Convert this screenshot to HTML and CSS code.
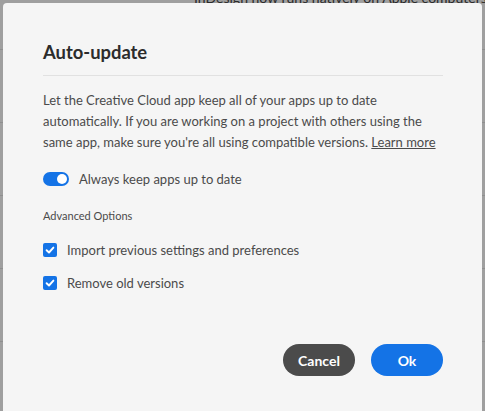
FILE: index.html
```html
<!DOCTYPE html>
<html>
<head>
<meta charset="utf-8">
<link rel="stylesheet" href="styles.css">
</head>
<body>
<div class="page">
  <div class="row row-top"><span class="news">InDesign now runs natively on Apple computers w</span></div>
  <div class="row"></div>
  <div class="row"></div>
  <div class="row"></div>
  <div class="row"></div>
  <div class="row"></div>
</div>
<div class="dialog">
  <h1 class="title">Auto-update</h1>
  <div class="divider"></div>
  <p class="desc">Let the Creative Cloud app keep all of your apps up to date automatically. If you are working on a project with others using the same app, make sure you're all using compatible versions. <a class="link">Learn more</a></p>
  <div class="toggle-row">
    <span class="switch"><span class="knob"></span></span>
    <span class="label">Always keep apps up to date</span>
  </div>
  <div class="section">Advanced Options</div>
  <div class="check-row">
    <span class="box"><svg viewBox="0 0 14 14" width="14" height="14"><path d="M3.6 7.2 L6 9.5 L10.4 4.6" fill="none" stroke="#fff" stroke-width="1.9" stroke-linecap="round" stroke-linejoin="round"/></svg></span>
    <span class="label">Import previous settings and preferences</span>
  </div>
  <div class="check-row">
    <span class="box"><svg viewBox="0 0 14 14" width="14" height="14"><path d="M3.6 7.2 L6 9.5 L10.4 4.6" fill="none" stroke="#fff" stroke-width="1.9" stroke-linecap="round" stroke-linejoin="round"/></svg></span>
    <span class="label">Remove old versions</span>
  </div>
  <div class="actions">
    <button class="btn btn-cancel">Cancel</button>
    <button class="btn btn-ok">Ok</button>
  </div>
</div>
</body>
</html>
```
FILE: styles.css
```css
* { box-sizing: border-box; }
html, body { margin: 0; padding: 0; }
body {
  width: 485px;
  height: 411px;
  overflow: hidden;
  background: #9f9f9f;
  font-family: Lato, "Open Sans", sans-serif;
}
.page {
  display: flex;
  flex-direction: column;
  width: 485px;
  overflow: hidden;
}
.row {
  height: 73px;
  border-bottom: 1px solid #8f8f8f;
}
.row-top { height: 50px; padding-left: 194px; overflow: hidden; }
.news {
  display: block;
  font-size: 14px;
  line-height: 14px;
  margin-top: -9px;
  color: #2a2a2a;
  white-space: nowrap;
}
.dialog {
  position: fixed;
  left: 3px;
  top: 3px;
  width: 479px;
  height: 412px;
  background: #f5f5f5;
  border-radius: 4px;
  padding: 37px 39px 0 40px;
  display: flex;
  flex-direction: column;
}
.title {
  margin: 0;
  font-size: 18.4px;
  line-height: 24px;
  font-weight: 700;
  color: #2c2c2c;
}
.divider {
  height: 1px;
  background: #e1e1e1;
  margin-top: 11px;
}
.desc {
  margin: 14px 0 0;
  font-size: 13px;
  line-height: 21px;
  color: #4b4b4b;
}
.link {
  color: #4b4b4b;
  text-decoration: underline;
}
.toggle-row {
  display: flex;
  align-items: center;
  margin-top: 17px;
  height: 18px;
}
.switch {
  width: 26px;
  height: 14px;
  border-radius: 7px;
  background: #1473e6;
  display: flex;
  align-items: center;
  justify-content: flex-end;
  padding-right: 2px;
  margin-right: 10px;
}
.knob {
  width: 10px;
  height: 10px;
  border-radius: 50%;
  background: #fff;
}
.label {
  font-size: 13px;
  color: #4b4b4b;
}
.section {
  margin-top: 20px;
  font-size: 11px;
  line-height: 16px;
  color: #4b4b4b;
}
.check-row {
  display: flex;
  align-items: center;
  height: 18px;
}
.section + .check-row { margin-top: 17px; }
.check-row + .check-row { margin-top: 15px; }
.box {
  width: 14px;
  height: 14px;
  border-radius: 2px;
  background: #1473e6;
  margin-right: 10px;
  display: flex;
}
.actions {
  display: flex;
  justify-content: flex-end;
  gap: 16px;
  margin-top: 52px;
}
.btn {
  width: 72px;
  height: 32px;
  border: none;
  border-radius: 16px;
  color: #fff;
  font-family: Lato, "Open Sans", sans-serif;
  font-size: 14px;
  font-weight: 700;
  padding: 0;
}
.btn-cancel { background: #4b4b4b; }
.btn-ok { background: #1473e6; }
```
